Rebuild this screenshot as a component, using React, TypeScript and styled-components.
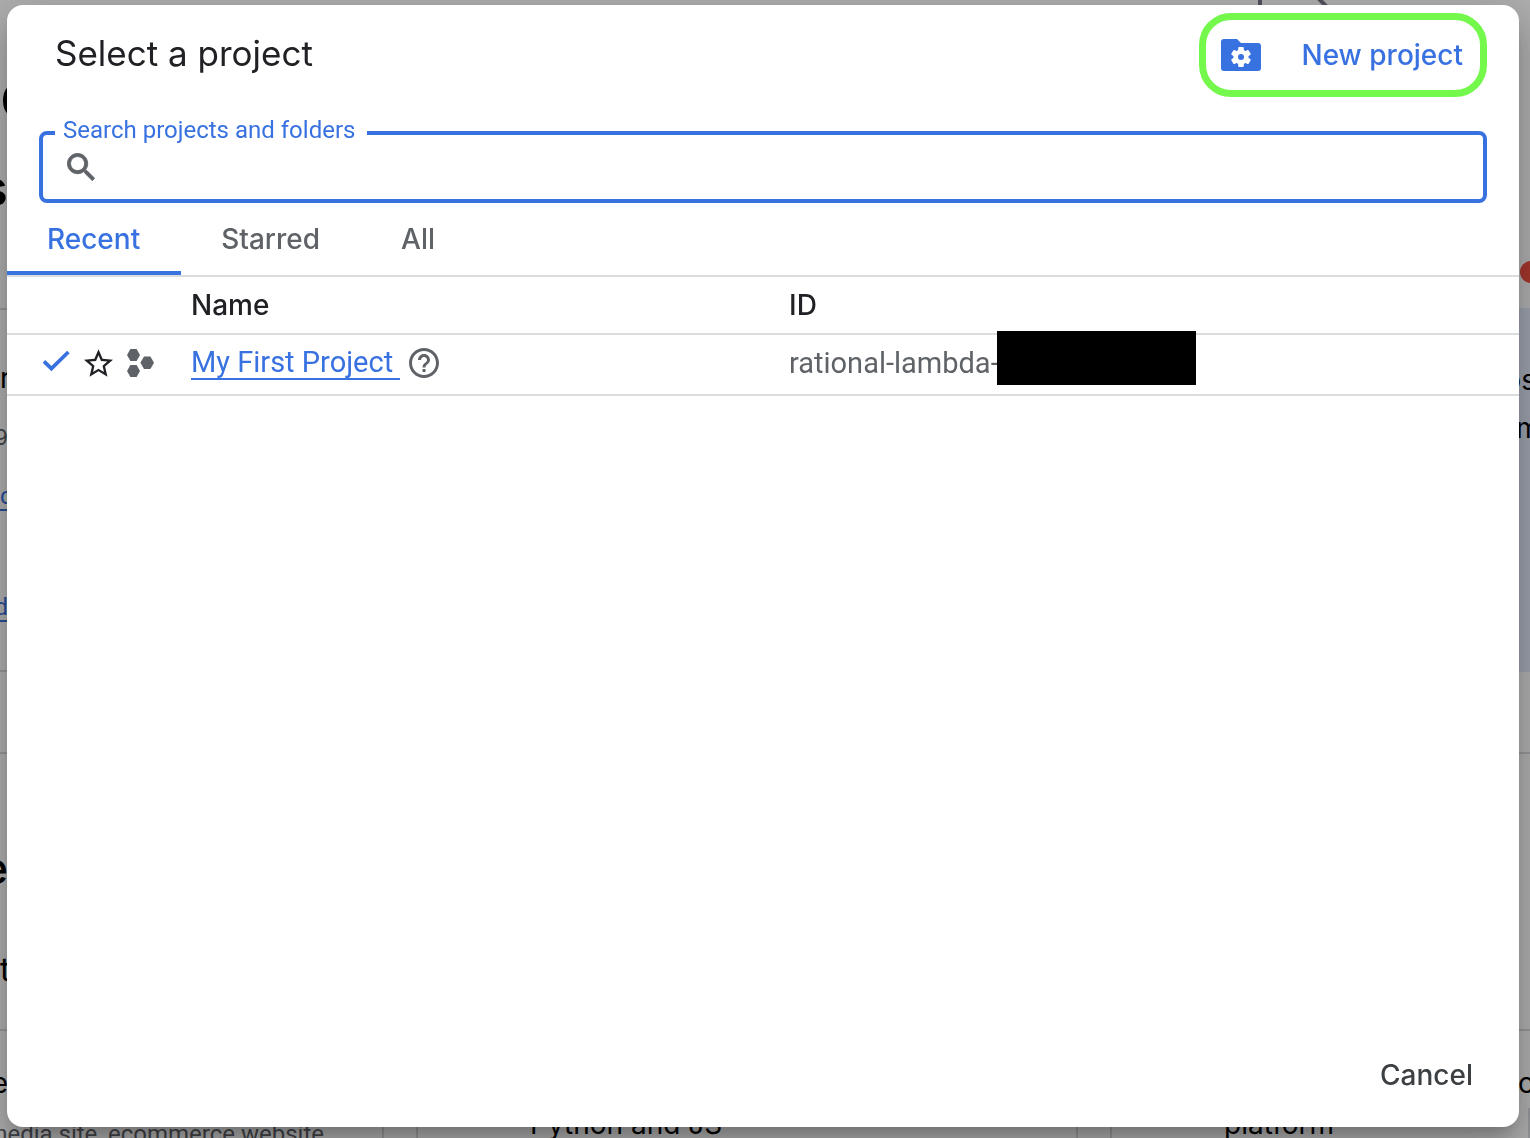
import React, { useState } from 'react';
import styled, { createGlobalStyle, css } from 'styled-components';

const color = {
  blue: '#3871e0',
  ink: '#202124',
  body: '#3c4043',
  muted: '#5f6368',
  line: '#dadce0',
  highlight: '#74f84b',
};
const display = "Inter, 'Liberation Sans', sans-serif";
const text = "Roboto, 'Liberation Sans', sans-serif";

const GlobalStyle = createGlobalStyle`
  *, *::before, *::after { box-sizing: border-box; }
  body { margin: 0; background: #fff; font-family: ${text}; color: ${color.ink}; }
  button { border: 0; padding: 0; background: none; cursor: pointer; }
`;

/* ---------- Console page behind the dialog ---------- */

const Page = styled.div`
  display: flex;
  flex-direction: column;
  height: 100vh;
  overflow: hidden;
`;

const TopBar = styled.div`
  display: flex;
  justify-content: flex-end;
  height: 6px;
  padding-right: 200px;
  overflow: hidden;
`;

const Columns = styled.div`
  display: flex;
  justify-content: space-between;
  flex: 1;
  min-height: 0;
`;

const Rail = styled.div<{ $width: number }>`
  display: flex;
  flex-direction: column;
  width: ${(p) => p.$width}px;
  overflow: hidden;
`;

const Slot = styled.div<{ $h: number; $end?: boolean; $line?: boolean; $tint?: boolean; $pad?: number }>`
  display: flex;
  flex: none;
  align-items: center;
  justify-content: ${(p) => (p.$end ? 'flex-end' : 'flex-start')};
  height: ${(p) => p.$h}px;
  padding-left: ${(p) => p.$pad || 0}px;
  background: ${(p) => (p.$tint ? '#e3ecfd' : 'transparent')};
  border-bottom: ${(p) => (p.$line ? `2px solid ${color.line}` : '0')};
`;

const Glyph = styled.span<{ $size: number; $weight?: number; $muted?: boolean }>`
  font: ${(p) => p.$weight || 400} ${(p) => p.$size}px ${display};
  color: ${(p) => (p.$muted ? color.muted : '#000')};
`;

const PageLink = styled.a`
  font: 400 24px/26px ${text};
  color: ${color.blue};
  text-decoration: none;
  border-bottom: 2px solid ${color.blue};
`;

const Dot = styled.span`
  flex: none;
  width: 22px;
  height: 22px;
  border-radius: 50%;
  background: #f0503f;
`;

const CardRow = styled.div`
  display: flex;
  gap: 32px;
  height: 30px;
  overflow: hidden;
`;

const Card = styled.div<{ $grow?: boolean; $width?: number; $indent: number; $first?: boolean }>`
  flex: ${(p) => (p.$grow ? '1' : `0 0 ${p.$width}px`)};
  min-width: 0;
  display: flex;
  justify-content: ${(p) => (p.$first ? 'flex-end' : 'flex-start')};
  padding-left: ${(p) => (p.$first ? 0 : p.$indent)}px;
  padding-right: ${(p) => (p.$first ? p.$indent : 0)}px;
  border: solid ${color.line};
  border-width: ${(p) => (p.$first ? '0 2px 0 0' : '0 2px')};
  white-space: nowrap;
`;

const CardTitle = styled.span`
  font: 400 28px/32px ${display};
  color: #000;
`;

const CardText = styled.span`
  padding-top: 12px;
  font: 400 24px/28px ${text};
  color: ${color.muted};
`;

/* ---------- Dialog ---------- */

const Scrim = styled.div`
  position: fixed;
  inset: 0;
  display: flex;
  padding: 5px 11px 11px 7px;
  background: rgba(0, 0, 0, 0.32);
`;

const Dialog = styled.section`
  display: flex;
  flex-direction: column;
  flex: 1;
  min-width: 0;
  padding-top: 8px;
  background: #fff;
  border-radius: 16px;
  box-shadow: 0 11px 15px -7px rgba(0, 0, 0, 0.2), 0 24px 38px 3px rgba(0, 0, 0, 0.14),
    0 9px 46px 8px rgba(0, 0, 0, 0.12);
`;

const Header = styled.header`
  display: flex;
  align-items: center;
  justify-content: space-between;
  padding: 0 32px 0 48px;
`;

const Title = styled.h1`
  margin: 0;
  padding-bottom: 4px;
  font: 400 35px/44px ${display};
`;

const NewProject = styled.button`
  display: flex;
  align-items: center;
  gap: 40px;
  height: 84px;
  && {
    padding: 0 17px 0 15px;
    border: 7px solid ${color.highlight};
  }
  border-radius: 32px;
  font: 500 28px/36px ${display};
  color: ${color.blue};
`;

const SearchField = styled.fieldset`
  min-width: 0;
  margin: 19px 32px 0;
  padding: 0 24px 15px 12px;
  border: 4px solid ${color.blue};
  border-radius: 8px;
`;

const Legend = styled.legend`
  padding: 0 12px 6px 8px;
  font: 400 24px/28px ${text};
  color: ${color.blue};
`;

const SearchLine = styled.div`
  display: flex;
  align-items: center;
  gap: 16px;
  height: 34px;
  padding-left: 12px;
`;

const SearchInput = styled.input`
  flex: 1;
  min-width: 0;
  height: 32px;
  padding: 0;
  border: 0;
  outline: 0;
  background: transparent;
  font: 400 28px/32px ${text};
  color: ${color.ink};
`;

const Tabs = styled.div`
  display: flex;
  border-bottom: 2px solid ${color.line};
`;

const Tab = styled.button<{ $active: boolean }>`
  height: 72px;
  && {
    padding: 0 41px 0 40px;
    border: solid transparent;
    border-width: 4px 0;
  }
  font: 500 28px/36px ${display};
  color: ${color.muted};
  ${(p) =>
    p.$active &&
    css`
      && {
        color: ${color.blue};
        border-bottom-color: ${color.blue};
      }
    `}
`;

const Table = styled.table`
  width: 100%;
  table-layout: fixed;
  border-collapse: separate;
  border-spacing: 0;
`;

const IconCol = styled.col`
  width: 184px;
`;

const NameCol = styled.col`
  width: 598px;
`;

const HeadCell = styled.th`
  height: 58px;
  padding: 0;
  border-bottom: 2px solid ${color.line};
  text-align: left;
  font: 500 28px/36px ${display};
`;

const Cell = styled.td`
  height: 61px;
  padding: 0 0 4px;
  border-bottom: 2px solid ${color.line};
  font: 400 29px/32px ${text};
  color: ${color.muted};
`;

const RowIcons = styled.div`
  display: flex;
  align-items: center;
  gap: 14px;
  padding-left: 35px;
  svg { display: block; }
`;

const IconButton = styled.button`
  display: block;
`;

const NameLine = styled.div`
  display: flex;
  align-items: center;
  gap: 9px;
  svg { display: block; }
`;

const ProjectLink = styled.a`
  padding-right: 7px;
  border-bottom: 2px solid ${color.blue};
  color: ${color.blue};
  text-decoration: none;
`;

const ProjectId = styled.span`
  position: relative;
  display: block;
  width: max-content;
`;

const Redaction = styled.span`
  position: absolute;
  left: calc(100% - 2px);
  top: -16px;
  width: 199px;
  height: 54px;
  background: #000;
`;

const Footer = styled.footer`
  display: flex;
  justify-content: flex-end;
  margin-top: auto;
  padding: 0 24px 16px;
`;

const Cancel = styled.button`
  height: 72px;
  && { padding: 0 22px; }
  font: 500 28px/36px ${display};
  color: ${color.body};
`;

/* ---------- Icons ---------- */

const FolderGearIcon = () => (
  <svg width="40" height="32" viewBox="0 0 40 32" aria-hidden="true">
    <path d="M3 0h13l4 4h17a3 3 0 0 1 3 3v22a3 3 0 0 1-3 3H3a3 3 0 0 1-3-3V3a3 3 0 0 1 3-3z" fill={color.blue} />
    <g fill="#fff">
      <circle cx="20" cy="18" r="7.6" />
      {[0, 60, 120].map((a) => (
        <rect key={a} x="17.2" y="8" width="5.6" height="20" rx="1" transform={`rotate(${a} 20 18)`} />
      ))}
    </g>
    <circle cx="20" cy="18" r="3" fill={color.blue} />
  </svg>
);

const SearchIcon = () => (
  <svg width="28" height="28" viewBox="2.7 2.7 18 18" fill={color.muted} stroke={color.muted} strokeWidth="0.6" aria-hidden="true">
    <path d="M15.5 14h-.79l-.28-.27C15.41 12.59 16 11.11 16 9.5 16 5.91 13.09 3 9.5 3S3 5.91 3 9.5 5.91 16 9.5 16c1.61 0 3.09-.59 4.23-1.57l.27.28v.79l5 4.99L20.49 19l-4.99-5zm-6 0C7.01 14 5 11.99 5 9.5S7.01 5 9.5 5 14 7.01 14 9.5 11.99 14 9.5 14z" />
  </svg>
);

const CheckIcon = () => (
  <svg width="28" height="28" viewBox="0 0 28 28" fill="none" stroke={color.blue} strokeWidth="3.8" aria-hidden="true">
    <path d="M2 12.4 9.4 19.6 26.4 3" />
  </svg>
);

const StarIcon = () => (
  <svg width="29" height="28" viewBox="2 2 20 19" fill={color.ink} aria-hidden="true">
    <path d="M22 9.24l-7.19-.62L12 2 9.19 8.63 2 9.24l5.46 4.73L5.82 21 12 17.27 18.18 21l-1.63-7.03L22 9.24zM12 15.4l-3.76 2.27 1-4.28-3.32-2.88 4.38-.38L12 6.1l1.71 4.04 4.38.38-3.32 2.88 1 4.28L12 15.4z" />
  </svg>
);

const ProjectIcon = () => (
  <svg width="27" height="28" viewBox="0 0 27 28" fill={color.muted} aria-hidden="true">
    <path d="M3.4 0h6.2L13 6l-3.4 6H3.4L0 6z" />
    <path d="M17 7.6h6.4l3.6 6.2-3.6 6.2H17l-3.6-6.2z" />
    <path d="M3.4 16h6.2l3.4 6-3.4 6H3.4L0 22z" />
  </svg>
);

const HelpIcon = () => (
  <svg width="30" height="30" viewBox="2 2 20 20" fill={color.muted} aria-hidden="true">
    <path d="M11 18h2v-2h-2v2zm1-16C6.48 2 2 6.48 2 12s4.48 10 10 10 10-4.48 10-10S17.52 2 12 2zm0 18c-4.41 0-8-3.59-8-8s3.59-8 8-8 8 3.59 8 8-3.59 8-8 8zm0-14c-2.21 0-4 1.79-4 4h2c0-1.1.9-2 2-2s2 .9 2 2c0 2-3 1.75-3 5h2c0-2.25 3-2.5 3-5 0-2.21-1.79-4-4-4z" />
  </svg>
);

function ConsolePage() {
  return (
    <Page>
      <TopBar>
        <svg width="72" height="6" viewBox="0 0 72 6" stroke="#77788a" fill="none" aria-hidden="true">
          <path d="M2 0v6" strokeWidth="4" />
          <path d="M60 -2 71 9" strokeWidth="4" />
        </svg>
      </TopBar>
      <Columns>
        <Rail $width={8}>
          <Slot $h={50} />
          <Slot $h={90}><Glyph $size={50}>C</Glyph></Slot>
          <Slot $h={84} $end><Glyph $size={50} $weight={500}>s</Glyph></Slot>
          <Slot $h={80} $line />
          <Slot $h={38} />
          <Slot $h={60}><Glyph $size={28}>r</Glyph></Slot>
          <Slot $h={58} $end><Glyph $size={22} $muted>9</Glyph></Slot>
          <Slot $h={62}><PageLink href="#c">c</PageLink></Slot>
          <Slot $h={48} />
          <Slot $h={64} $end><PageLink href="#d">d</PageLink></Slot>
          <Slot $h={32} $line />
          <Slot $h={82} $line />
          <Slot $h={72} />
          <Slot $h={84} $end><Glyph $size={44} $weight={500}>e</Glyph></Slot>
          <Slot $h={121} $line><Glyph $size={32}>t</Glyph></Slot>
          <Slot $h={28} />
          <Slot $h={48} $end><Glyph $size={28}>e</Glyph></Slot>
        </Rail>
        <Rail $width={32}>
          <Slot $h={246} />
          <Slot $h={40} $pad={22}><Dot /></Slot>
          <Slot $h={16} />
          <Slot $h={48} $tint />
          <Slot $h={48} $tint $pad={6}><Glyph $size={28}>ps</Glyph></Slot>
          <Slot $h={48} $tint $pad={18}><Glyph $size={28}>m</Glyph></Slot>
          <Slot $h={220} $tint />
          <Slot $h={82} $line />
          <Slot $h={277} $line />
          <Slot $h={28} />
          <Slot $h={48} $pad={20}><Glyph $size={28}>c</Glyph></Slot>
        </Rail>
      </Columns>
      <CardRow>
        <Card $width={384} $indent={58} $first><CardText>media site, ecommerce website</CardText></Card>
        <Card $grow $indent={112}><CardTitle>Python and JS</CardTitle></Card>
        <Card $width={420} $indent={112}><CardTitle>platform</CardTitle></Card>
      </CardRow>
    </Page>
  );
}

const tabs = ['Recent', 'Starred', 'All'];

export default function App() {
  const [active, setActive] = useState('Recent');
  const [query, setQuery] = useState('');
  return (
    <>
      <GlobalStyle />
      <ConsolePage />
      <Scrim>
        <Dialog role="dialog" aria-modal="true" aria-labelledby="dialog-title">
          <Header>
            <Title id="dialog-title">Select a project</Title>
            <NewProject type="button">
              <FolderGearIcon />
              New project
            </NewProject>
          </Header>
          <SearchField>
            <Legend>
              <label htmlFor="project-search">Search projects and folders</label>
            </Legend>
            <SearchLine>
              <SearchIcon />
              <SearchInput
                id="project-search"
                type="text"
                value={query}
                onChange={(e) => setQuery(e.target.value)}
              />
            </SearchLine>
          </SearchField>
          <Tabs role="tablist">
            {tabs.map((tab) => (
              <Tab
                key={tab}
                type="button"
                role="tab"
                aria-selected={tab === active}
                $active={tab === active}
                onClick={() => setActive(tab)}
              >
                {tab}
              </Tab>
            ))}
          </Tabs>
          <Table>
            <colgroup>
              <IconCol />
              <NameCol />
              <col />
            </colgroup>
            <thead>
              <tr>
                <HeadCell aria-label="Status" />
                <HeadCell scope="col">Name</HeadCell>
                <HeadCell scope="col">ID</HeadCell>
              </tr>
            </thead>
            <tbody>
              <tr>
                <Cell>
                  <RowIcons>
                    <CheckIcon />
                    <IconButton type="button" aria-label="Star project"><StarIcon /></IconButton>
                    <ProjectIcon />
                  </RowIcons>
                </Cell>
                <Cell>
                  <NameLine>
                    <ProjectLink href="#project">My First Project</ProjectLink>
                    <IconButton type="button" aria-label="Help"><HelpIcon /></IconButton>
                  </NameLine>
                </Cell>
                <Cell>
                  <ProjectId>
                    rational-lambda-
                    <Redaction />
                  </ProjectId>
                </Cell>
              </tr>
            </tbody>
          </Table>
          <Footer>
            <Cancel type="button">Cancel</Cancel>
          </Footer>
        </Dialog>
      </Scrim>
    </>
  );
}
